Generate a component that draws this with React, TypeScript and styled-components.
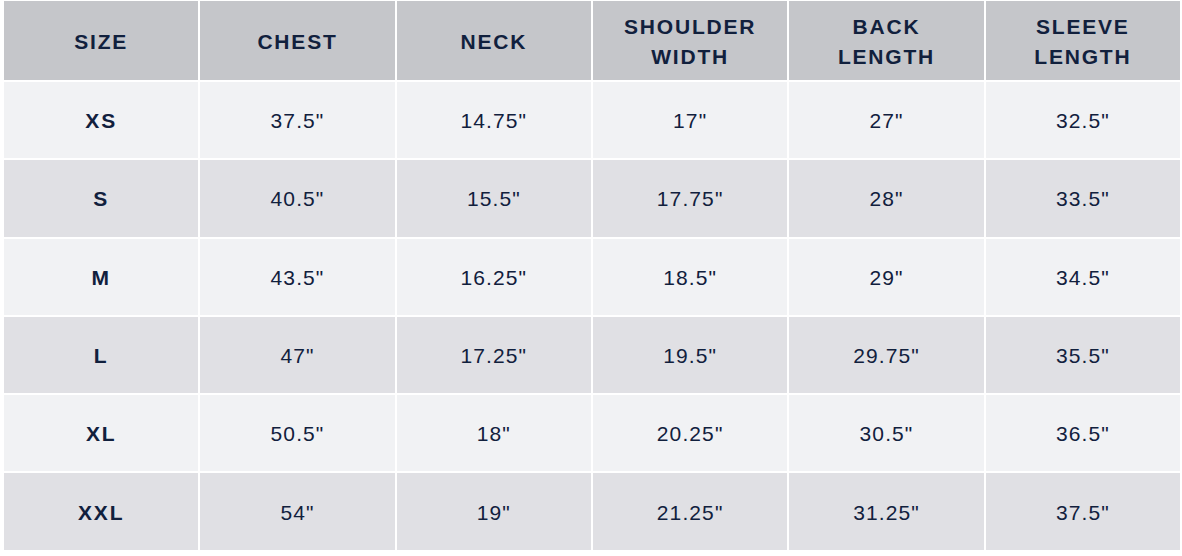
import styled, { createGlobalStyle } from "styled-components";

const GlobalStyle = createGlobalStyle`
  html, body {
    margin: 0;
    padding: 0;
    background: #ffffff;
  }
  body {
    font-family: "Liberation Sans", Arial, sans-serif;
    color: #11203d;
  }
`;

const Page = styled.div`
  padding: 1px 2px 0 4px;
  width: 1182px;
  box-sizing: border-box;
`;

const Table = styled.div`
  display: grid;
  grid-template-columns: repeat(6, minmax(0, 1fr));
  grid-template-rows: 79px;
  grid-auto-rows: 76.3px;
  gap: 2px;
`;

const HeadCell = styled.div`
  display: flex;
  align-items: center;
  justify-content: center;
  background: #c5c6ca;
  padding-top: 3px;
`;

const HeadLabel = styled.div`
  text-align: center;
  font-size: 21px;
  font-weight: 700;
  letter-spacing: 1.8px;
  line-height: 30px;
  text-transform: uppercase;
`;

const Cell = styled.div<{ $alt: boolean; $bold?: boolean }>`
  display: flex;
  align-items: center;
  justify-content: center;
  background: ${(p) => (p.$alt ? "#e0e0e4" : "#f1f2f4")};
  font-size: 21px;
  font-weight: ${(p) => (p.$bold ? 700 : 400)};
  letter-spacing: ${(p) => (p.$bold ? "1.8px" : "1.1px")};
  padding-top: 2px;
`;

const headers = [
  ["Size"],
  ["Chest"],
  ["Neck"],
  ["Shoulder", "Width"],
  ["Back", "Length"],
  ["Sleeve", "Length"],
];

const rows = [
  ["XS", '37.5"', '14.75"', '17"', '27"', '32.5"'],
  ["S", '40.5"', '15.5"', '17.75"', '28"', '33.5"'],
  ["M", '43.5"', '16.25"', '18.5"', '29"', '34.5"'],
  ["L", '47"', '17.25"', '19.5"', '29.75"', '35.5"'],
  ["XL", '50.5"', '18"', '20.25"', '30.5"', '36.5"'],
  ["XXL", '54"', '19"', '21.25"', '31.25"', '37.5"'],
];

function App() {
  return (
    <>
      <GlobalStyle />
      <Page>
        <Table>
          {headers.map((lines) => (
            <HeadCell key={lines.join(" ")}>
              <HeadLabel>
                {lines.map((l, i) => (
                  <span key={l}>
                    {i > 0 && <br />}
                    {l}
                  </span>
                ))}
              </HeadLabel>
            </HeadCell>
          ))}
          {rows.map((row, r) =>
            row.map((val, c) => (
              <Cell key={`${r}-${c}`} $alt={r % 2 === 1} $bold={c === 0}>
                {val}
              </Cell>
            ))
          )}
        </Table>
      </Page>
    </>
  );
}

export default App;
